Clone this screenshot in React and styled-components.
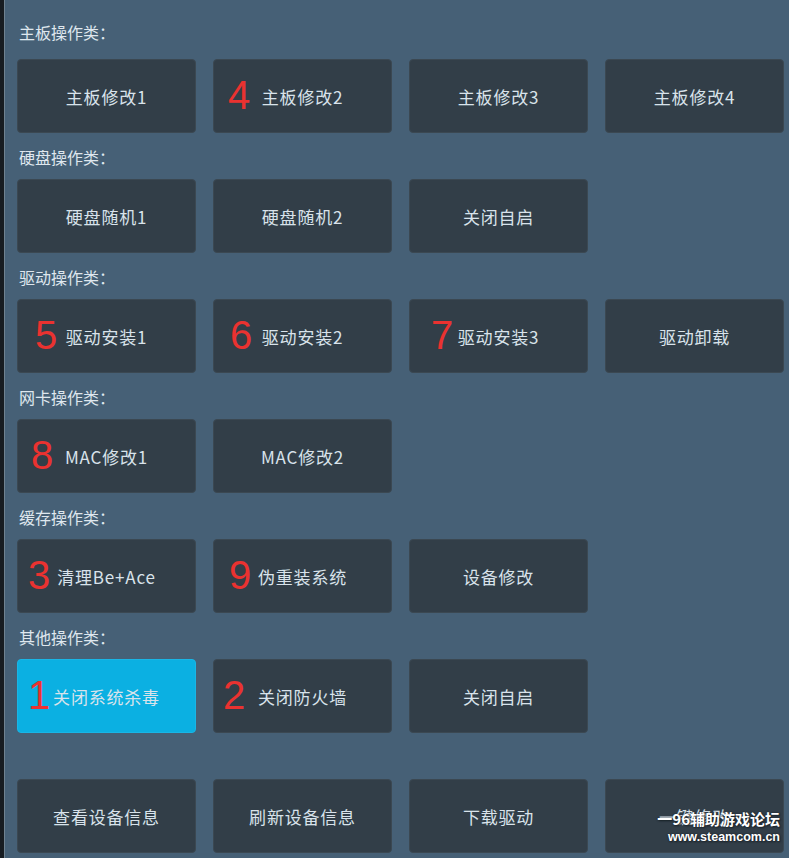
import React from 'react';
import styled, { createGlobalStyle } from 'styled-components';

const GlobalStyle = createGlobalStyle`
    html, body {
        margin: 0;
        padding: 0;
        background: #466076;
    }
    * {
        box-sizing: border-box;
    }
`;

const sections = [
    { title: '主板操作类：', items: [
        { text: '主板修改1' },
        { text: '主板修改2', num: '4', at: 14 },
        { text: '主板修改3' },
        { text: '主板修改4' },
    ] },
    { title: '硬盘操作类：', items: [
        { text: '硬盘随机1' },
        { text: '硬盘随机2' },
        { text: '关闭自启' },
    ] },
    { title: '驱动操作类：', items: [
        { text: '驱动安装1', num: '5', at: 17 },
        { text: '驱动安装2', num: '6', at: 16 },
        { text: '驱动安装3', num: '7', at: 21 },
        { text: '驱动卸载' },
    ] },
    { title: '网卡操作类：', items: [
        { text: 'MAC修改1', num: '8', at: 13 },
        { text: 'MAC修改2' },
    ] },
    { title: '缓存操作类：', items: [
        { text: '清理Be+Ace', num: '3', at: 10 },
        { text: '伪重装系统', num: '9', at: 15 },
        { text: '设备修改' },
    ] },
    { title: '其他操作类：', items: [
        { text: '关闭系统杀毒', num: '1', at: 10, active: true },
        { text: '关闭防火墙', num: '2', at: 9 },
        { text: '关闭自启' },
    ] },
];

const footer = ['查看设备信息', '刷新设备信息', '下载驱动', '一键修改'];

export default function App() {
    return (
        <Page>
            <GlobalStyle />
            <Strip />
            <Panel>
                {sections.map((section) => (
                    <Section key={section.title}>
                        <Label>{section.title}</Label>
                        <Grid>
                            {section.items.map((item) => (
                                <Button key={item.text} active={item.active}>
                                    {item.num && <Num style={{ left: item.at }}>{item.num}</Num>}
                                    {item.text}
                                </Button>
                            ))}
                        </Grid>
                    </Section>
                ))}
                <Footer>
                    {footer.map((text) => (
                        <Button key={text}>{text}</Button>
                    ))}
                </Footer>
                <Watermark>
                    <span>一96辅助游戏论坛</span>
                    <small>www.steamcom.cn</small>
                </Watermark>
            </Panel>
        </Page>
    );
}

const Page = styled.div`
    display: flex;
    height: 858px;
    overflow: hidden;
    background: #466076;
    font-family: "Noto Sans CJK SC", "Noto Sans", sans-serif;
`;

const Strip = styled.div`
    width: 5px;
    flex: none;
    background: #171c21;
    border-right: 1px solid #6f8290;
`;

const Panel = styled.div`
    position: relative;
    flex: 1;
    padding: 22px 0 0 12px;
`;

const Section = styled.div`
    margin-bottom: 14px;
    &:first-child > div:first-child {
        margin-bottom: 17px;
    }
`;

const Label = styled.div`
    height: 20px;
    line-height: 20px;
    margin: 0 0 12px 2px;
    font-size: 16px;
    color: #dfe7ee;
`;

const Grid = styled.div`
    display: grid;
    grid-template-columns: repeat(4, 179px);
    column-gap: 17px;
`;

const Footer = styled(Grid)`
    margin-top: 46px;
`;

const Button = styled.div`
    position: relative;
    height: 74px;
    display: flex;
    align-items: center;
    justify-content: center;
    border-radius: 4px;
    border: 1px solid ${(p) => (p.active ? '#19b6e6' : '#3b4852')};
    background: ${(p) => (p.active ? '#0bb0e2' : '#323e48')};
    color: #d9e3eb;
    font-size: 17px;
    letter-spacing: 0.8px;
`;

const Num = styled.span`
    position: absolute;
    top: 50%;
    transform: translateY(-52%);
    font-family: "Liberation Sans", Arial, sans-serif;
    font-size: 40px;
    line-height: 1;
    letter-spacing: 0;
    color: #ea3230;
`;

const Watermark = styled.div`
    position: absolute;
    right: 9px;
    bottom: 13px;
    display: flex;
    flex-direction: column;
    align-items: flex-end;
    color: #ffffff;
    font-weight: 700;
    text-shadow: 0 0 2px #1a2229, 1px 1px 2px #1a2229;
    span {
        font-size: 15px;
        line-height: 20px;
    }
    small {
        font-family: "Liberation Sans", Arial, sans-serif;
        font-size: 12.5px;
        line-height: 16px;
    }
`;
